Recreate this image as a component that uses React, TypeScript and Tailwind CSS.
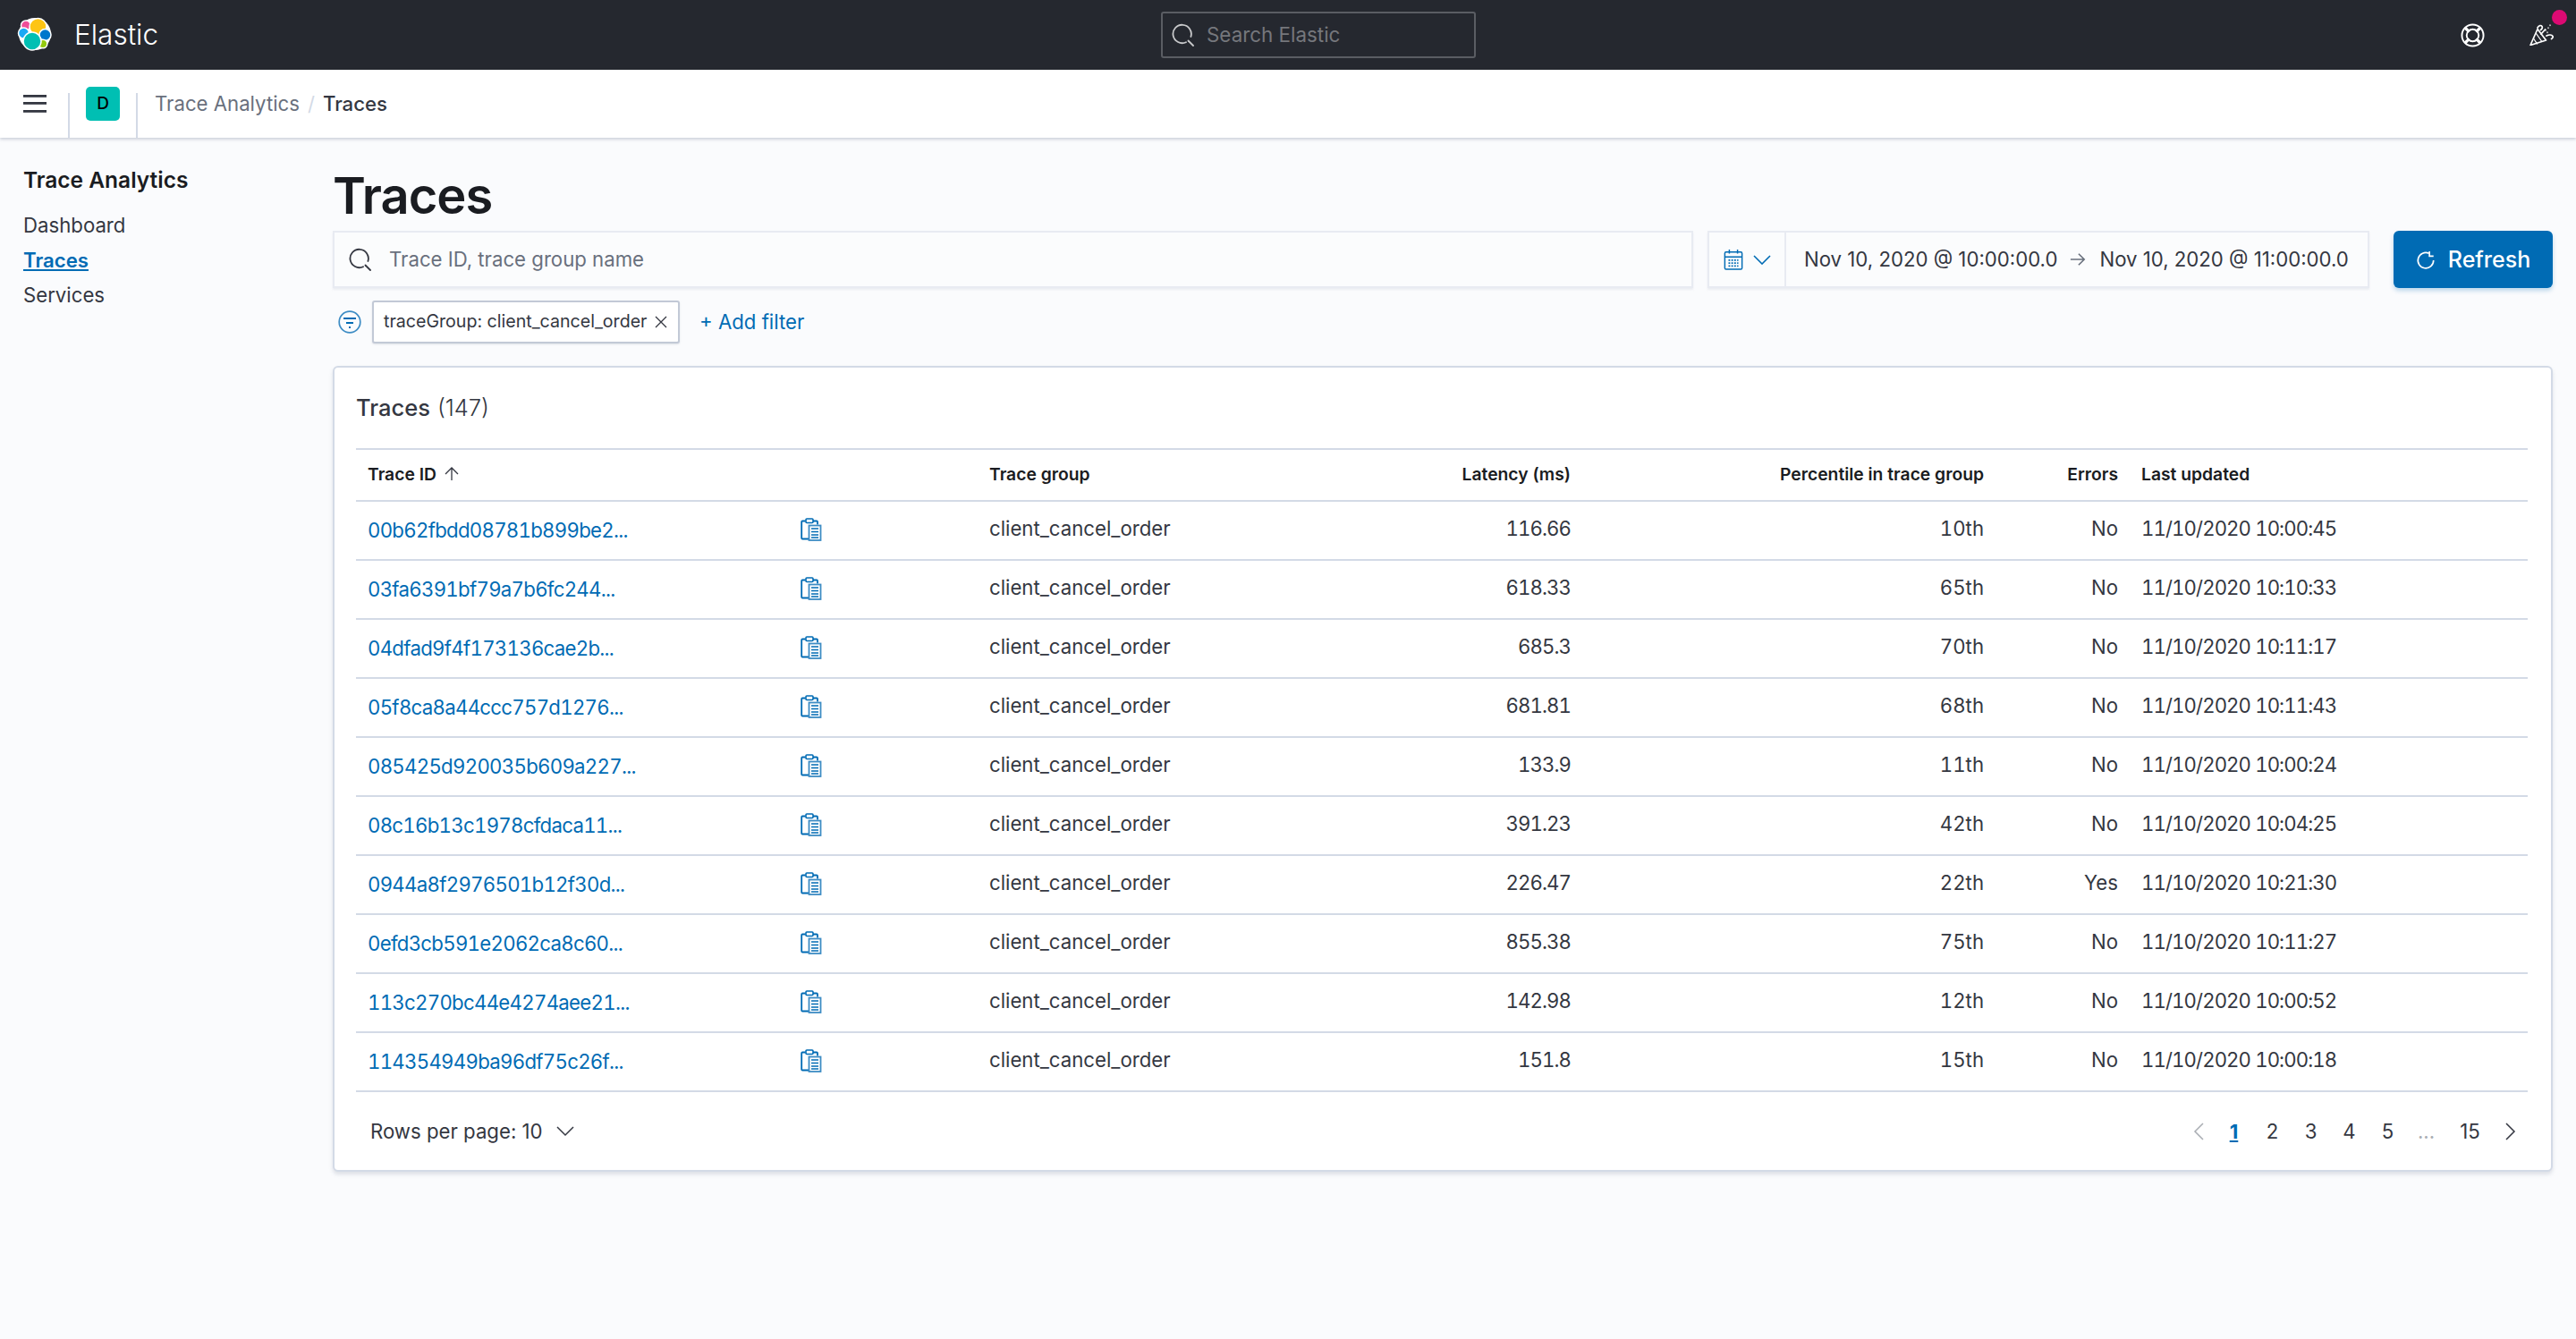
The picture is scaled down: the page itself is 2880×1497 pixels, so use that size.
import React from "react";

const rows = [
  ["00b62fbdd08781b899be2...", "116.66", "10th", "No", "11/10/2020 10:00:45"],
  ["03fa6391bf79a7b6fc244...", "618.33", "65th", "No", "11/10/2020 10:10:33"],
  ["04dfad9f4f173136cae2b...", "685.3", "70th", "No", "11/10/2020 10:11:17"],
  ["05f8ca8a44ccc757d1276...", "681.81", "68th", "No", "11/10/2020 10:11:43"],
  ["085425d920035b609a227...", "133.9", "11th", "No", "11/10/2020 10:00:24"],
  ["08c16b13c1978cfdaca11...", "391.23", "42th", "No", "11/10/2020 10:04:25"],
  ["0944a8f2976501b12f30d...", "226.47", "22th", "Yes", "11/10/2020 10:21:30"],
  ["0efd3cb591e2062ca8c60...", "855.38", "75th", "No", "11/10/2020 10:11:27"],
  ["113c270bc44e4274aee21...", "142.98", "12th", "No", "11/10/2020 10:00:52"],
  ["114354949ba96df75c26f...", "151.8", "15th", "No", "11/10/2020 10:00:18"],
];

function SearchIcon({ className }: { className: string }) {
  return (
    <svg viewBox="0 0 26 26" className={className} fill="none" stroke="currentColor" strokeWidth="1.8">
      <path d="M16 21.2A10.2 10.2 0 1 1 21.4 15" strokeLinecap="round" />
      <path d="M18.5 19.5l5.5 5.5" strokeLinecap="round" />
    </svg>
  );
}

function Logo() {
  return (
    <svg viewBox="0 0 40 40" className="h-[40px] w-[40px]">
      <circle cx="20" cy="19" r="18" fill="#fff" />
      <circle cx="10" cy="9.5" r="5.5" fill="#f04e98" stroke="#fff" strokeWidth="1.5" />
      <circle cx="23.5" cy="11" r="9.5" fill="#fec514" stroke="#fff" strokeWidth="1.5" />
      <circle cx="7.5" cy="18" r="6" fill="#1ba9f5" stroke="#fff" strokeWidth="1.5" />
      <circle cx="31.5" cy="20" r="6.5" fill="#0077cc" stroke="#fff" strokeWidth="1.5" />
      <circle cx="29" cy="30" r="4.8" fill="#93c90e" stroke="#fff" strokeWidth="1.5" />
      <circle cx="17" cy="27" r="10" fill="#00bfb3" stroke="#fff" strokeWidth="1.5" />
    </svg>
  );
}

function ClipboardIcon() {
  return (
    <svg viewBox="0 0 24 26" className="h-[26px] w-[24px]" fill="none">
      <path d="M5.5 3.5H2.2a1 1 0 0 0-1 1v18a1 1 0 0 0 1 1h7M14 3.5h4a1 1 0 0 1 1 1v3" stroke="#006bb4" strokeWidth="1.8" />
      <rect x="6" y="1" width="8" height="4.5" rx="1" stroke="#006bb4" strokeWidth="1.6" />
      <rect x="9.5" y="8.5" width="13" height="16.5" stroke="#3d8cc4" strokeWidth="1.8" fill="#fff" />
      <path d="M12 12h8M12 15.5h8M12 19h8M12 22h8" stroke="#006bb4" strokeWidth="1.4" />
    </svg>
  );
}

export default function App() {
  return (
    <div className="flex h-[1497px] w-[2880px] flex-col overflow-hidden bg-[#fafbfd] font-['Inter',sans-serif] text-[#343741]">
      <header className="flex h-[78px] shrink-0 items-center bg-[#25282f] pl-[19px] pr-[25px]">
        <div className="flex w-[1279px] items-center gap-[24px]">
          <Logo />
          <span className="text-[31.5px] font-light text-white">Elastic</span>
        </div>
        <div className="flex h-[52px] w-[352px] items-center gap-[13px] rounded-[3px] border-2 border-[#5a5d63] pl-[10px] text-[#c8c9cb]">
          <SearchIcon className="h-[26px] w-[26px]" />
          <span className="text-[22.4px] text-[#75777c]">Search Elastic</span>
        </div>
        <div className="ml-auto flex items-center">
          <svg viewBox="0 0 28 28" className="h-[27px] w-[27px]" fill="none" stroke="#fff" strokeWidth="2">
            <circle cx="14" cy="14" r="12.5" />
            <circle cx="14" cy="14" r="7" />
            <path d="M5 5l5 5M23 5l-5 5M5 23l5-5M23 23l-5-5" strokeWidth="3.5" />
          </svg>
          <div className="relative ml-[50px] h-[24px] w-[27px]">
            <svg viewBox="0 0 27 24" className="h-[24px] w-[27px]" fill="none" stroke="#fff" strokeWidth="1.7" strokeLinejoin="round" strokeLinecap="round">
              <path d="M1 23.5L9 5.5 18.5 18z" />
              <path d="M4.5 16l4 6M7.5 10.5l6 8.5" strokeWidth="1.3" />
              <path d="M9 4c1.5-3 4-3 5-1.5 .8 1.2 0 3-1.5 4M13 11l4.5-5M19 13c3-1.5 6-1 7 .5 .5 1-.3 2.5-1.5 3" />
              <path d="M18 6.5v.5M21 4v.5M23 1v.5M20 9v.5" strokeWidth="1.3" />
            </svg>
            <span className="absolute left-[25px] top-[-16px] h-[17px] w-[17px] rounded-full bg-[#dd0a73]" />
          </div>
        </div>
      </header>

      <nav className="flex h-[76px] shrink-0 items-center bg-white shadow-[0_2px_3px_rgba(152,162,179,0.45)]">
        <div className="flex w-[76px] items-center justify-center pl-[2px]">
          <svg viewBox="0 0 26 20" className="h-[20px] w-[26px]" fill="#343741">
            <rect y="0" width="26" height="2.8" />
            <rect y="8" width="26" height="2.8" />
            <rect y="17" width="26" height="2.8" />
          </svg>
        </div>
        <div className="h-[50px] w-[2px] self-end bg-[#d3dae6]" />
        <div className="flex w-[74px] items-center justify-center">
          <div className="flex h-[38px] w-[38px] items-center justify-center rounded-[5px] bg-[#00bfb3] text-[19px] font-medium text-black">D</div>
        </div>
        <div className="h-[50px] w-[2px] self-end bg-[#d3dae6]" />
        <div className="flex items-center gap-[9px] pl-[19px] text-[22.2px]">
          <span className="text-[#69707d]">Trace Analytics</span>
          <span className="text-[#d3dae6]">/</span>
          <span className="font-medium text-[#343741]">Traces</span>
        </div>
      </nav>

      <div className="flex min-h-0 flex-1">
        <aside className="w-[372px] shrink-0 pl-[26px] pt-[29px]">
          <h2 className="text-[24.5px] font-semibold leading-[36px] text-[#1a1c21]">Trace Analytics</h2>
          <ul className="mt-[16px] flex flex-col gap-[6px] text-[22.2px] leading-[33px] text-[#343741]">
            <li>Dashboard</li>
            <li className="font-semibold text-[#006bb4] underline">Traces</li>
            <li>Services</li>
          </ul>
        </aside>

        <main className="flex-1">
          <h1 className="mt-[27px] text-[56px] font-semibold leading-[76px] tracking-[-1px] text-[#1a1c21]">Traces</h1>

          <div className="mt-px flex h-[64px] items-stretch">
            <div className="flex w-[1521px] items-center gap-[19px] border-2 border-[#e8ebf2] bg-[#fbfcfd] pl-[16px] text-[#343741] shadow-[0_2px_2px_rgba(152,162,179,0.15)]">
              <SearchIcon className="h-[26px] w-[26px]" />
              <span className="text-[22.2px] text-[#69707d]">Trace ID, trace group name</span>
            </div>
            <div className="ml-[16px] flex w-[740px] items-center whitespace-nowrap border-2 border-[#e8ebf2] bg-[#fbfcfd] shadow-[0_2px_2px_rgba(152,162,179,0.15)]">
              <div className="flex h-full w-[86px] items-center justify-center gap-[11px] border-r-2 border-[#e8ebf2]">
                <svg viewBox="0 0 24 26" className="h-[24px] w-[22px]" fill="none" stroke="#006bb4" strokeWidth="1.6">
                  <rect x="1.5" y="4" width="21" height="21" rx="1.5" />
                  <path d="M1.5 10h21M7 1v5M17 1v5" />
                  <path d="M6 14h12M6 17.5h12M6 21h12" strokeWidth="2" strokeDasharray="2 1.5" />
                </svg>
                <svg viewBox="0 0 20 11" className="h-[11px] w-[20px]" fill="none" stroke="#006bb4" strokeWidth="1.6">
                  <path d="M1 1l9 9 9-9" />
                </svg>
              </div>
              <span className="ml-[20px] text-[22.2px]">Nov 10, 2020 @ 10:00:00.0</span>
              <svg viewBox="0 0 20 18" className="ml-[14px] h-[18px] w-[18px]" fill="none" stroke="#69707d" strokeWidth="1.8">
                <path d="M1 9h17M11 2l7 7-7 7" />
              </svg>
              <span className="ml-[15px] text-[22.2px]">Nov 10, 2020 @ 11:00:00.0</span>
            </div>
            <div className="ml-[27px] flex w-[178px] items-center justify-center gap-[14px] rounded-[6px] bg-[#006bb4] pt-px text-white shadow-[0_3px_5px_rgba(0,107,180,0.25)]">
              <svg viewBox="0 0 24 24" className="h-[22px] w-[22px]" fill="none" stroke="#fff" strokeWidth="1.8">
                <path d="M16 3.5A9.5 9.5 0 1 0 21.5 12" />
                <path d="M16.5 1v6h5" />
              </svg>
              <span className="text-[25px] font-medium">Refresh</span>
            </div>
          </div>

          <div className="mt-[14px] flex h-[48px] items-center">
            <svg viewBox="0 0 26 26" className="ml-[6px] h-[26px] w-[26px]" fill="none" stroke="#3d8cc4" strokeWidth="1.7">
              <circle cx="13" cy="13" r="11.8" />
              <path d="M6 9h14M9 14h8M12 19h2" stroke="#006bb4" strokeWidth="2" />
            </svg>
            <div className="ml-[12px] flex h-[48px] w-[344px] items-center gap-[9px] whitespace-nowrap rounded-[3px] border-2 border-[#c2c9d6] bg-white pl-[11px] text-[19.6px] text-[#343741] shadow-[0_1px_2px_rgba(152,162,179,0.3)]">
              <span>traceGroup: client_cancel_order</span>
              <svg viewBox="0 0 14 14" className="h-[14px] w-[14px]" fill="none" stroke="#343741" strokeWidth="1.3">
                <path d="M1 1l12 12M13 1L1 13" />
              </svg>
            </div>
            <span className="ml-[22px] text-[22.2px] text-[#006bb4]">+ Add filter</span>
          </div>

          <section className="mt-[25px] h-[901px] w-[2482px] rounded-[6px] border-2 border-[#d3dae6] bg-white pl-[24px] pr-[26px] shadow-[0_3px_4px_rgba(152,162,179,0.3)]">
            <div className="flex h-[90px] items-center text-[25.5px] text-[#343741]">
              <span className="font-medium">Traces</span>
              <span className="ml-[8px] font-light">(147)</span>
            </div>
            <table className="w-[2428px] table-fixed border-collapse border-t-2 border-[#d3dae6] text-[22.2px]">
              <colgroup>
                <col className="w-[497px]" />
                <col className="w-[211px]" />
                <col className="w-[300px]" />
                <col className="w-[350px]" />
                <col className="w-[462px]" />
                <col className="w-[150px]" />
                <col />
              </colgroup>
              <thead>
                <tr className="h-[58px] border-b-2 border-[#d3dae6] text-[19.3px] font-semibold text-[#1a1c21]">
                  <th className="pb-[2px] pl-[13px] text-left font-semibold">
                    <span className="inline-flex items-center gap-[9px]">
                      Trace ID
                      <svg viewBox="0 0 16 16" className="h-[18px] w-[16px]" fill="none" stroke="#343741" strokeWidth="1.3">
                        <path d="M8 15V1M1 8l7-7 7 7" />
                      </svg>
                    </span>
                  </th>
                  <th />
                  <th className="pb-[2px] text-left font-semibold">Trace group</th>
                  <th className="pb-[2px] text-right font-semibold">Latency (ms)</th>
                  <th className="pb-[2px] text-right font-semibold">Percentile in trace group</th>
                  <th className="pb-[2px] text-right font-semibold">Errors</th>
                  <th className="pb-[2px] pl-[26px] text-left font-semibold">Last updated</th>
                </tr>
              </thead>
              <tbody>
                {rows.map((r) => (
                  <tr key={r[0]} className="h-[66px] border-b-2 border-[#d3dae6]">
                    <td className="pb-[1px] pl-[13px] tracking-[-0.7px] text-[#006bb4] tabular-nums">{r[0]}</td>
                    <td className="pb-[2px]">
                      <ClipboardIcon />
                    </td>
                    <td className="pb-[5px]">client_cancel_order</td>
                    <td className="pb-[5px] text-right tracking-[-0.9px] tabular-nums">{r[1]}</td>
                    <td className="pb-[5px] text-right tabular-nums">{r[2]}</td>
                    <td className="pb-[5px] text-right">{r[3]}</td>
                    <td className="pb-[5px] pl-[26px] tracking-[-0.9px] tabular-nums">{r[4]}</td>
                  </tr>
                ))}
              </tbody>
            </table>
            <div className="flex h-[88px] items-center justify-between pl-[16px] pr-[13px] text-[22.2px]">
              <div className="flex items-center gap-[15px]">
                <span>Rows per page: 10</span>
                <svg viewBox="0 0 20 12" className="h-[12px] w-[20px]" fill="none" stroke="#343741" strokeWidth="1.5">
                  <path d="M1 1l9 9 9-9" />
                </svg>
              </div>
              <div className="flex items-center text-center">
                <svg viewBox="0 0 12 20" className="h-[20px] w-[12px]" fill="none" stroke="#a9adb3" strokeWidth="1.5">
                  <path d="M11 1l-9 9 9 9" />
                </svg>
                <span className="ml-[12px] w-[43px] font-bold text-[#006bb4]"><span className="underline">1</span></span>
                <span className="w-[43px]">2</span>
                <span className="w-[43px]">3</span>
                <span className="w-[43px]">4</span>
                <span className="w-[43px]">5</span>
                <span className="w-[43px] text-[#a9adb3]">...</span>
                <span className="w-[55px]">15</span>
                <svg viewBox="0 0 12 20" className="ml-[12px] h-[20px] w-[12px]" fill="none" stroke="#343741" strokeWidth="1.5">
                  <path d="M1 1l9 9-9 9" />
                </svg>
              </div>
            </div>
          </section>
        </main>
      </div>
    </div>
  );
}
